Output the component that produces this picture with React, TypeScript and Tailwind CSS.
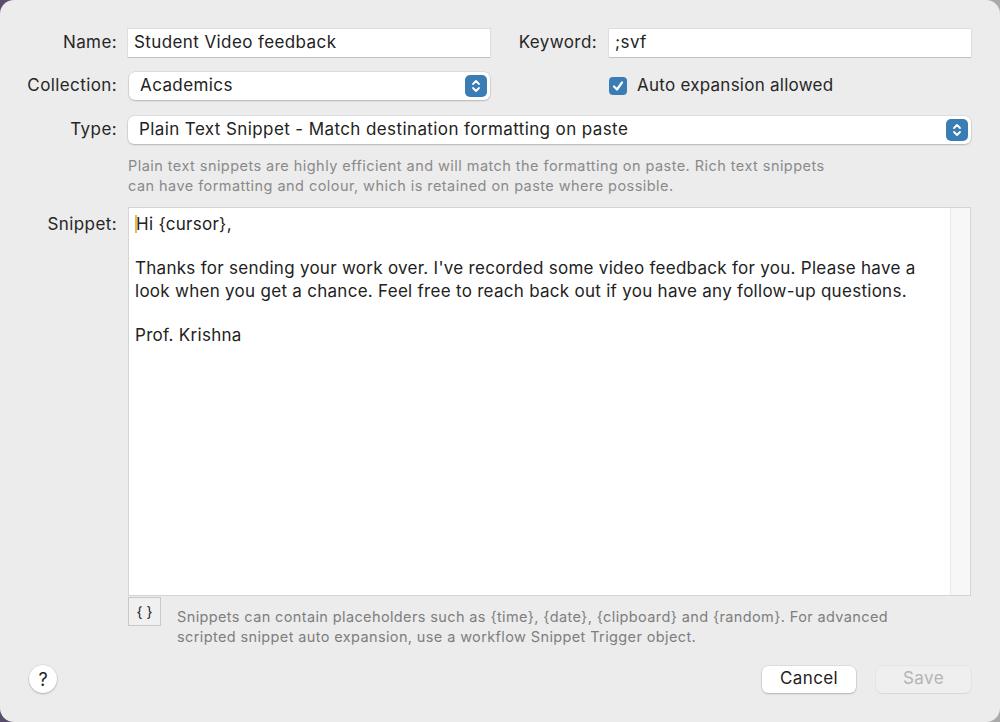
import React from 'react';

const font = { fontFamily: 'Inter, "Noto Sans", sans-serif' };

function Stepper() {
  return (
    <div className="w-[22px] h-[22px] rounded-[5px] bg-[#3a7db5] flex items-center justify-center">
      <svg width="10" height="14" viewBox="0 0 10 14" fill="none" stroke="white" strokeWidth="1.8" strokeLinecap="round" strokeLinejoin="round">
        <path d="M2 5 L5 2 L8 5" />
        <path d="M2 9 L5 12 L8 9" />
      </svg>
    </div>
  );
}

function TextField({ value, className = '' }: { value: string; className?: string }) {
  return (
    <div className={`h-[28px] bg-white flex items-center px-[6px] text-[17px] tracking-[0.4px] text-[#222] shadow-[0_0_0_1px_rgba(0,0,0,0.06),0_1px_0_rgba(0,0,0,0.12)] ${className}`}>
      {value}
    </div>
  );
}

function Popup({ value, className = '' }: { value: string; className?: string }) {
  return (
    <div className={`h-[28px] bg-white rounded-[6px] flex items-center justify-between pl-[11px] pr-[3px] text-[17px] tracking-[0.4px] text-[#222] shadow-[0_0_0_0.5px_rgba(0,0,0,0.12),0_1px_2px_rgba(0,0,0,0.18)] ${className}`}>
      <span>{value}</span>
      <Stepper />
    </div>
  );
}

export default function App() {
  return (
    <div className="w-[1000px] h-[722px] bg-gradient-to-r from-[#5a4c6b] via-[#8a8290] to-[#a9a9a9]" style={font}>
      <div className="w-full h-full rounded-[14px] bg-[#ececec] flex flex-col pt-[29px] pr-[29px] text-[#262626]">
        {/* Name / Keyword */}
        <div className="flex items-center text-[17px] tracking-[0.4px]">
          <div className="w-[117px] text-right">Name:</div>
          <TextField value="Student Video feedback" className="ml-[11px] w-[362px]" />
          <div className="w-[107px] text-right">Keyword:</div>
          <TextField value=";svf" className="ml-[12px] w-[362px]" />
        </div>

        {/* Collection / Auto expansion */}
        <div className="flex items-center mt-[15px] text-[17px] tracking-[0.4px]">
          <div className="w-[117px] text-right">Collection:</div>
          <Popup value="Academics" className="ml-[12px] w-[361px]" />
          <div className="ml-[119px] flex items-center gap-[10px]">
            <div className="w-[18px] h-[18px] rounded-[4px] bg-[#3a7db5] flex items-center justify-center">
              <svg width="14" height="14" viewBox="0 0 14 14" fill="none" stroke="white" strokeWidth="2.2" strokeLinecap="round" strokeLinejoin="round">
                <path d="M3 7.5 L6 10.5 L11 3.5" />
              </svg>
            </div>
            <span className="tracking-[0.25px]">Auto expansion allowed</span>
          </div>
        </div>

        {/* Type */}
        <div className="flex items-center mt-[16px] text-[17px] tracking-[0.4px]">
          <div className="w-[117px] text-right">Type:</div>
          <Popup value="Plain Text Snippet - Match destination formatting on paste" className="ml-[11px] flex-1" />
        </div>

        <div className="ml-[128px] mt-[12px] text-[14.5px] tracking-[0.45px] leading-[20px] text-[#8a8a8a]">
          <div>Plain text snippets are highly efficient and will match the formatting on paste. Rich text snippets</div>
          <div>can have formatting and colour, which is retained on paste where possible.</div>
        </div>

        {/* Snippet */}
        <div className="flex mt-[11px]">
          <div className="w-[117px] text-right text-[17px] tracking-[0.4px] pt-[5px]">Snippet:</div>
          <div className="ml-[11px] flex-1 h-[389px] bg-white border border-[#d4d4d4] flex">
            <div className="flex-1 pl-[6px] pt-[5px] text-[17px] tracking-[0.28px] leading-[22.2px] text-[#222]">
              <div className="flex items-center">
                <span className="inline-block w-[2px] h-[18px] bg-[#e2bf4c] mr-[-1px]"></span>
                <span>Hi {'{cursor}'},</span>
              </div>
              <div className="h-[22.2px]"></div>
              <div>Thanks for sending your work over. I've recorded some video feedback for you. Please have a</div>
              <div>look when you get a chance. Feel free to reach back out if you have any follow-up questions.</div>
              <div className="h-[22.2px]"></div>
              <div>Prof. Krishna</div>
            </div>
            <div className="w-[20px] bg-[#f7f7f7] border-l border-[#e8e8e8]"></div>
          </div>
        </div>

        {/* Placeholders */}
        <div className="flex ml-[128px] mt-[1px]">
          <div className="w-[33px] h-[29px] border border-[#c8c8c8] bg-[#f0f0f0] flex items-start justify-center pt-[3px] text-[14px] text-[#222]">
            {'{ }'}
          </div>
          <div className="ml-[16px] mt-[10px] text-[14.5px] tracking-[0.38px] leading-[20px] text-[#7e7e7e]">
            <div>Snippets can contain placeholders such as {'{time}'}, {'{date}'}, {'{clipboard}'} and {'{random}'}. For advanced</div>
            <div>scripted snippet auto expansion, use a workflow Snippet Trigger object.</div>
          </div>
        </div>

        {/* Footer */}
        <div className="flex items-center mt-[18px]">
          <div className="ml-[29px] w-[28px] h-[28px] rounded-full bg-white flex items-center justify-center text-[18px] text-[#222] shadow-[0_0_0_0.5px_rgba(0,0,0,0.12),0_1px_2px_rgba(0,0,0,0.2)]">?</div>
          <div className="flex-1"></div>
          <div className="w-[94px] h-[27px] rounded-[6px] bg-white flex items-center justify-center text-[17px] tracking-[0.4px] text-[#222] shadow-[0_0_0_0.5px_rgba(0,0,0,0.12),0_1px_2px_rgba(0,0,0,0.2)]">Cancel</div>
          <div className="ml-[20px] w-[95px] h-[27px] rounded-[6px] bg-[#efefef] flex items-center justify-center text-[17px] tracking-[0.4px] text-[#b4b4b4] shadow-[0_0_0_0.5px_rgba(0,0,0,0.06),0_1px_1px_rgba(0,0,0,0.06)]">Save</div>
        </div>
      </div>
    </div>
  );
}
